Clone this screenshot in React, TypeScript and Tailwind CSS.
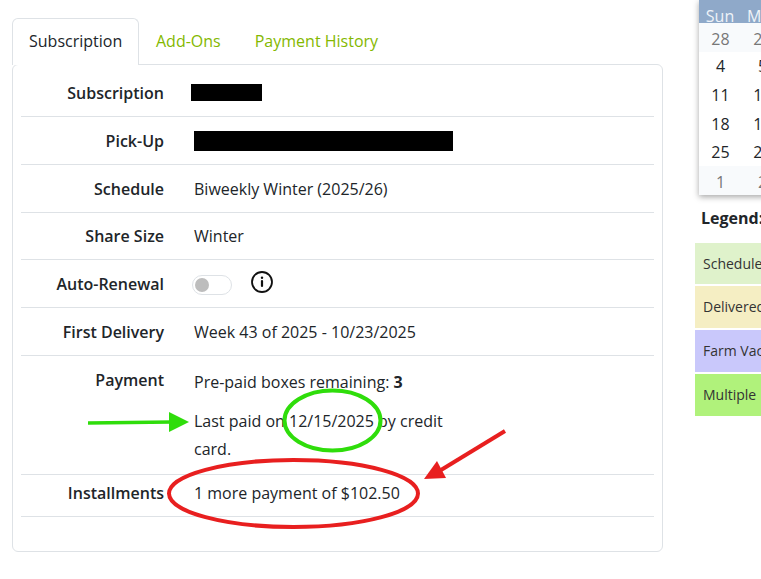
import { ReactNode } from "react";

function Row({ label, children, className }: { label: string; children: ReactNode; className: string }) {
  return (
    <div className={`flex border-b border-[#dee2e6] ${className}`}>
      <div className="w-[143px] shrink-0 text-right font-semibold text-[#212529]">{label}</div>
      <div className="ml-[30px] w-[258px] text-[#212529]">{children}</div>
    </div>
  );
}

function Redacted({ className }: { className: string }) {
  return <div className={`bg-black ${className}`} />;
}

const weeks = [
  { days: [28, 29], muted: true, height: "h-[29px] pt-[2px]" },
  { days: [4, 5], muted: false, height: "h-[28px]" },
  { days: [11, 12], muted: false, height: "h-[29px]" },
  { days: [18, 19], muted: false, height: "h-[29px]" },
  { days: [25, 26], muted: false, height: "h-[28px]" },
  { days: [1, 2], muted: true, height: "h-[29px] pt-[3px]" },
];

const legend = [
  { label: "Scheduled", color: "h-[41px] bg-[#dff2cb]" },
  { label: "Delivered", color: "h-[42px] bg-[#f5eec3]" },
  { label: "Farm Vacation", color: "h-[42px] bg-[#c9c8fb]" },
  { label: "Multiple", color: "h-[42px] bg-[#b0f27b]" },
];

function Annotations() {
  return (
    <svg className="absolute left-0 top-0" width="761" height="579" fill="none">
      <ellipse cx="332.5" cy="420.5" rx="48" ry="30" stroke="#2fdd0b" strokeWidth="4" />
      <path d="M88 423 L172 422" stroke="#2fdd0b" strokeWidth="3.5" />
      <path d="M169 412 L189 422 L169 432 Z" fill="#2fdd0b" />
      <ellipse cx="293.5" cy="493.5" rx="124.5" ry="33.5" stroke="#e81f1f" strokeWidth="4" />
      <path d="M505 431 L441 470" stroke="#e81f1f" strokeWidth="4" />
      <path d="M424 479 L437 461 L446 478 Z" fill="#e81f1f" />
    </svg>
  );
}

export default function App() {
  return (
    <div className="relative flex h-[579px] w-[761px] overflow-hidden bg-white font-['Open_Sans',sans-serif] text-[16px] leading-[24px]">
      <div className="ml-3 mt-[18px] w-[651px] shrink-0">
        <div className="relative z-10 flex h-[46px]">
          <div className="h-[47px] w-[127px] rounded-t-[6px] border border-b-0 border-[#dee2e6] bg-white pl-4 pt-[10px] text-[#212529]">
            Subscription
          </div>
          <div className="pl-[17px] pr-4 pt-[11px] text-[#84b800]">Add-Ons</div>
          <div className="pl-[18px] pt-[11px] text-[#84b800]">Payment History</div>
        </div>
        <div className="h-[488px] rounded-[6px] border border-[#dee2e6] px-2">
          <Row label="Subscription" className="h-[52px] pt-[16px]">
            <Redacted className="-ml-[3px] mt-[3px] h-[17px] w-[71px]" />
          </Row>
          <Row label="Pick-Up" className="h-[48px] pt-[12px]">
            <Redacted className="mt-[2px] h-[20px] w-[259px]" />
          </Row>
          <Row label="Schedule" className="h-[48px] pt-[12px]">
            Biweekly Winter (2025/26)
          </Row>
          <Row label="Share Size" className="h-[47px] pt-[11px]">
            Winter
          </Row>
          <Row label="Auto-Renewal" className="h-[48px] pt-[12px]">
            <div className="flex items-start">
              <div className="-ml-[2px] mt-[3px] flex h-[20px] w-[40px] items-center rounded-full border border-[#dee2e6] pl-[2px]">
                <div className="h-[14px] w-[14px] rounded-full bg-[#bdbdbd]" />
              </div>
              <svg className="ml-[18px] -mt-[2px]" width="24" height="24" viewBox="0 0 24 24" fill="none" stroke="#111" strokeWidth="1.8" strokeLinecap="round">
                <circle cx="12" cy="12" r="10" />
                <path d="M12 16v-5" strokeWidth="2.2" />
                <path d="M12 7.6v.1" strokeWidth="2.4" />
              </svg>
            </div>
          </Row>
          <Row label="First Delivery" className="h-[48px] pt-[12px]">
            Week 43 of 2025 - 10/23/2025
          </Row>
          <Row label="Payment" className="h-[119px] pt-[12px]">
            <p className="mt-[2px]">
              Pre-paid boxes remaining: <b className="font-bold">3</b>
            </p>
            <p className="mt-[13px] leading-[28px]">Last paid on 12/15/2025 by credit card.</p>
          </Row>
          <Row label="Installments" className="h-[42px] pt-[6px]">
            1 more payment of $102.50
          </Row>
        </div>
      </div>

      <div className="ml-[32px] w-[200px] shrink-0">
        <div className="ml-1 w-[196px] bg-white shadow-[0_2px_6px_rgba(0,0,0,0.35)]">
          <div className="flex h-[23px] bg-[#8fa9c9] pt-[4px] text-[#eef3f8]">
            <div className="w-[42px] text-center">Sun</div>
            <div className="ml-[6px]">Mon</div>
          </div>
          {weeks.map((week) => (
            <div
              key={week.days[0]}
              className={`flex items-center ${week.height} ${week.muted ? "bg-[#f8fafc] text-[#777]" : "text-[#212529]"}`}
            >
              {week.days.map((day) => (
                <div key={day} className="w-[42px] pl-[1px] text-center">
                  {day}
                </div>
              ))}
            </div>
          ))}
        </div>
        <div className="ml-[6px] mt-[11px] whitespace-nowrap font-bold text-[#212529]">Legend:</div>
        <div className="mt-[13px] flex flex-col gap-[2px]">
          {legend.map((item) => (
            <div key={item.label} className={`flex items-center whitespace-nowrap pl-2 text-[14px] text-[#333] ${item.color}`}>
              {item.label}
            </div>
          ))}
        </div>
      </div>

      <Annotations />
    </div>
  );
}
